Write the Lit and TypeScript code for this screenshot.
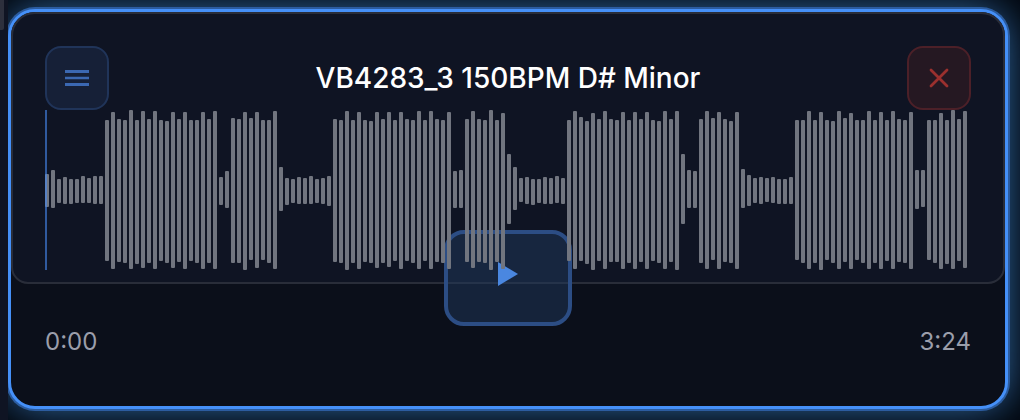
import { LitElement, html, css } from "lit";
import { customElement } from "lit/decorators.js";

// Each peak is "top/bottom" in thirds of a pixel; the lane starts at 30.
const PEAKS = `222/321 210/324 237/309 231/312 237/312 237/309 228/309 234/309 228/312 228/312
60/483 36/507 57/486 60/489 30/507 60/492 33/504 57/489 33/507 60/483 63/489 36/504 57/486 36/507 60/483 60/489 36/507 57/489 33/507
231/315 213/324 54/489 57/489 36/510 54/480 36/504 60/480 60/489 33/507
201/333 234/315 237/309 231/312 234/312 228/312 237/309 234/312 228/318
57/486 60/489 33/510 60/489 36/507 60/486 63/489 36/504 57/489 36/501 60/483 36/507 57/483 60/489 33/507 60/483 33/507 57/486 60/489 36/507
213/324 210/324 57/486 33/504 57/486 60/489 30/510 60/486 39/507
162/372 201/330 234/306 231/312 237/315 237/309 231/312 234/312 228/309 234/312
60/483 33/507 51/483 63/492 39/510 57/483 33/507 57/486 60/486 36/507 60/489 36/507 57/486 36/507 60/483 63/489 33/507 57/486 33/510
162/372 210/324 213/324 57/489 33/507 54/480 36/507 57/486 63/489 36/507
207/324 225/318 234/309 231/312 234/306 231/309 237/312 237/312 231/312
60/480 60/489 33/507 60/489 36/510 60/480 63/489 33/507 54/486 39/507 60/480 60/489 33/507 60/489 36/507 60/483 33/507 57/486 60/489 36/507
210/327 210/321 60/480 60/489 39/507 60/492 30/507 57/483 33/504`
  .split(/\s+/)
  .map((p) => p.split("/").map((v) => (Number(v) - 30) / 3));

@customElement("wave-form")
class WaveForm extends LitElement {
  static styles = css`
    :host { display: block; position: relative; height: 160px; }
    .bars { display: flex; gap: 2px; height: 160px; }
    .bar { width: 4px; flex: none; border-radius: 1px; background: #71757f; }
    .cursor { position: absolute; left: 0; top: 0; width: 2px; height: 160px; background: rgba(70, 136, 240, 0.6); }
  `;
  render() {
    return html`<div class="bars">
        ${PEAKS.map(([t, b]) => html`<div class="bar" style="margin-top:${t}px;height:${b - t}px"></div>`)}
      </div>
      <div class="cursor"></div>`;
  }
}

@customElement("app-root")
class AppRoot extends LitElement {
  static styles = css`
    * { box-sizing: border-box; }
    :host {
      display: flex; position: relative; box-sizing: border-box; width: 1020px; height: 420px;
      overflow: hidden; background: #0f1423; font-family: Inter, sans-serif;
    }
    .rail { width: 8px; flex: none; }
    .thumb { width: 4px; height: 30px; background: #2d303d; border-radius: 0 0 2px 0; }
    .stage { flex: 1; overflow: hidden; padding-top: 9px; background: #02060d; }
    .card {
      width: 1000px; height: 400px; border: 3px solid #4590f8; border-radius: 27px; background: #0b0f1a;
      box-shadow: 0 0 0 2px #2c5c9f, 0 0 40px rgba(66, 140, 215, 0.76);
      position: relative;
    }
    .panel {
      height: 272px; border: 2px solid #292d39; border-radius: 24px 24px 17px 17px; background: #0f1423;
      padding: 32px 32px 0;
    }
    .head { display: flex; justify-content: space-between; align-items: center; height: 64px; }
    .btn { width: 64px; height: 64px; border-radius: 16px; border: 2px solid #203459; background: #162037; display: grid; place-items: center; }
    .close { border-color: #4c2028; background: #251822; }
    .title { color: #fff; font-size: 28px; font-weight: 500; white-space: nowrap; }
    wave-form { z-index: 2; }
    .play {
      position: absolute; left: 433px; top: 218px; width: 128px; height: 96px; border-radius: 20px;
      border: 4px solid #2c4d84; background: rgba(34, 58, 94, 0.48); z-index: 1;
      display: grid; justify-items: center; align-items: start; padding-top: 28px;
    }
    .times { display: flex; justify-content: space-between; padding: 43px 34px 0; font-size: 24px; line-height: 30px; color: #9b9eab; }
    svg { display: block; }
  `;
  render() {
    return html`
      <div class="rail"><div class="thumb"></div></div>
      <div class="stage">
        <div class="card">
          <div class="panel">
            <div class="head">
              <div class="btn"><svg width="24" height="16" fill="#3b68b2"><path d="M0 0h24v3H0zM0 6.7h24v2.6H0zM0 13h24v3H0z" /></svg></div>
              <div class="title">VB4283_3 150BPM D# Minor</div>
              <div class="btn close"><svg width="20" height="20" fill="none" stroke="#9b302e" stroke-width="2.8" stroke-linecap="round"><path d="M2 2l16 16M18 2L2 18" /></svg></div>
            </div>
            <wave-form></wave-form>
          </div>
          <div class="play"><svg width="20" height="24" fill="#4a87e0"><path d="M0 0L20 12L0 24z" /></svg></div>
          <div class="times"><span>0:00</span><span>3:24</span></div>
        </div>
      </div>
    `;
  }
}
